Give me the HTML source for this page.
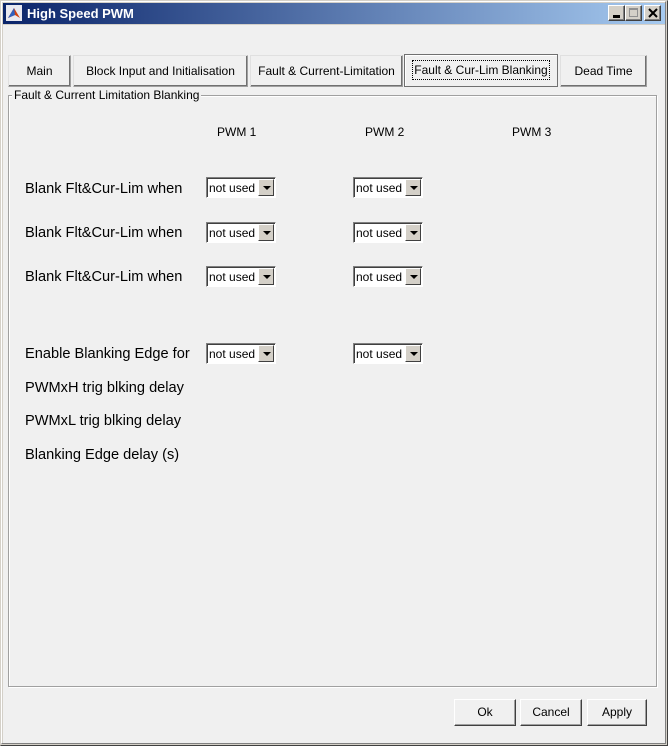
<!DOCTYPE html>
<html><head><meta charset="utf-8"><style>
*{box-sizing:border-box;margin:0;padding:0}
body{width:668px;height:746px;background:#d4d0c8;font-family:"Liberation Sans",Arial,sans-serif;position:relative;overflow:hidden}
.abs{position:absolute}
#win{left:0;top:0;width:668px;height:746px;border:1px solid #d4d0c8;border-right-color:#404040;border-bottom-color:#404040}
#inner{left:1px;top:1px;width:665px;height:743px;border:1px solid #fff;border-right-color:#808080;border-bottom-color:#808080}
#title{left:3px;top:3px;width:662px;height:21px;background:linear-gradient(90deg,#0a246a,#a6caf0);color:#fff;font-weight:bold;font-size:13px;line-height:21px;padding-left:24px}
#client{left:3px;top:25px;width:662px;height:718px;background:#f0f0f0}
.tb{top:5px;width:17px;height:16px;background:#d4d0c8;border:1px solid;border-color:#fff #404040 #404040 #fff;box-shadow:inset -1px -1px 0 #808080}
.tab{top:55px;height:32px;background:#f0f0f0;border:1px solid #a0a0a0;border-top-color:#e0e0e0;border-left-color:#e0e0e0;box-shadow:inset -1px -1px 0 #707070;font-size:12px;line-height:30px;text-align:center;color:#000}
.lbl{font-size:14.6px;color:#000}
.hdr{font-size:12px;color:#000}
.dd{width:70px;height:21px;background:#fff;border:1px solid;border-color:#808080 #fff #fff #808080;box-shadow:inset 1px 1px 0 #404040}
.dd span{position:absolute;left:2px;top:2px;font-size:12px;line-height:16px}
.dd i{position:absolute;right:1px;top:1px;width:16px;height:17px;background:#d4d0c8;border:1px solid;border-color:#fff #404040 #404040 #fff}
.dd i:after{content:"";position:absolute;left:4px;top:6px;border-left:4px solid transparent;border-right:4px solid transparent;border-top:4px solid #000}
.btn{top:699px;height:27px;background:#f0f0f0;border:1px solid;border-color:#fff #404040 #404040 #fff;box-shadow:inset -1px -1px 0 #a0a0a0;font-size:12px;line-height:25px;text-align:center}
</style></head><body>
<div id="win" class="abs"></div>
<div id="inner" class="abs"></div>
<div id="title" class="abs">High Speed PWM</div>
<svg class="abs" style="left:6px;top:5px" width="16" height="16"><rect width="16" height="16" fill="#e8e8f0"/><polygon points="2,13 8,3 14,13 9,10" fill="#d04010"/><polygon points="8,3 9,10 2,13" fill="#3060c0"/></svg>
<div class="tb abs" style="left:608px"><div class="abs" style="left:4px;top:9px;width:7px;height:3px;background:#000"></div></div>
<div class="tb abs" style="left:625px"><div class="abs" style="left:3px;top:2px;width:9px;height:9px;border:1px solid #909090;border-top-width:2px"></div></div>
<div class="tb abs" style="left:644px"><svg class="abs" style="left:3px;top:2px" width="10" height="10"><path d="M1 1L9 9M9 1L1 9" stroke="#000" stroke-width="2"/></svg></div>
<div id="client" class="abs"></div>
<div class="tab abs" style="left:8px;width:63px">Main</div>
<div class="tab abs" style="left:73px;width:175px">Block Input and Initialisation</div>
<div class="tab abs" style="left:250px;width:153px">Fault &amp; Current-Limitation</div>
<div class="tab abs" style="left:404px;width:154px;top:54px;height:33px;border-color:#707070;box-shadow:inset 1px 1px 0 #fff"><span style="border:1px dotted #000;padding:2px 1px">Fault &amp; Cur-Lim Blanking</span></div>
<div class="tab abs" style="left:560px;width:87px">Dead Time</div>
<div class="abs" style="left:8px;top:95px;width:649px;height:592px;border:1px solid #a0a0a0;box-shadow:inset 1px 1px 0 #fff,1px 1px 0 #fff"></div>
<div class="abs hdr" style="left:12px;top:88px;background:#f0f0f0;padding:0 2px">Fault &amp; Current Limitation Blanking</div>
<div class="abs hdr" style="left:217px;top:125px">PWM 1</div>
<div class="abs hdr" style="left:365px;top:125px">PWM 2</div>
<div class="abs hdr" style="left:512px;top:125px">PWM 3</div>
<div class="abs lbl" style="left:25px;top:181px">Blank Flt&amp;Cur-Lim when</div>
<div class="abs lbl" style="left:25px;top:225px">Blank Flt&amp;Cur-Lim when</div>
<div class="abs lbl" style="left:25px;top:269px">Blank Flt&amp;Cur-Lim when</div>
<div class="abs lbl" style="left:25px;top:346px">Enable Blanking Edge for</div>
<div class="abs lbl" style="left:25px;top:380px">PWMxH trig blking delay</div>
<div class="abs lbl" style="left:25px;top:413px">PWMxL trig blking delay</div>
<div class="abs lbl" style="left:25px;top:447px">Blanking Edge delay (s)</div>
<div class="abs dd" style="left:206px;top:177px"><span>not used</span><i></i></div>
<div class="abs dd" style="left:353px;top:177px"><span>not used</span><i></i></div>
<div class="abs dd" style="left:206px;top:222px"><span>not used</span><i></i></div>
<div class="abs dd" style="left:353px;top:222px"><span>not used</span><i></i></div>
<div class="abs dd" style="left:206px;top:266px"><span>not used</span><i></i></div>
<div class="abs dd" style="left:353px;top:266px"><span>not used</span><i></i></div>
<div class="abs dd" style="left:206px;top:343px"><span>not used</span><i></i></div>
<div class="abs dd" style="left:353px;top:343px"><span>not used</span><i></i></div>
<div class="btn abs" style="left:454px;width:62px">Ok</div>
<div class="btn abs" style="left:520px;width:62px">Cancel</div>
<div class="btn abs" style="left:587px;width:60px">Apply</div>
</body></html>
